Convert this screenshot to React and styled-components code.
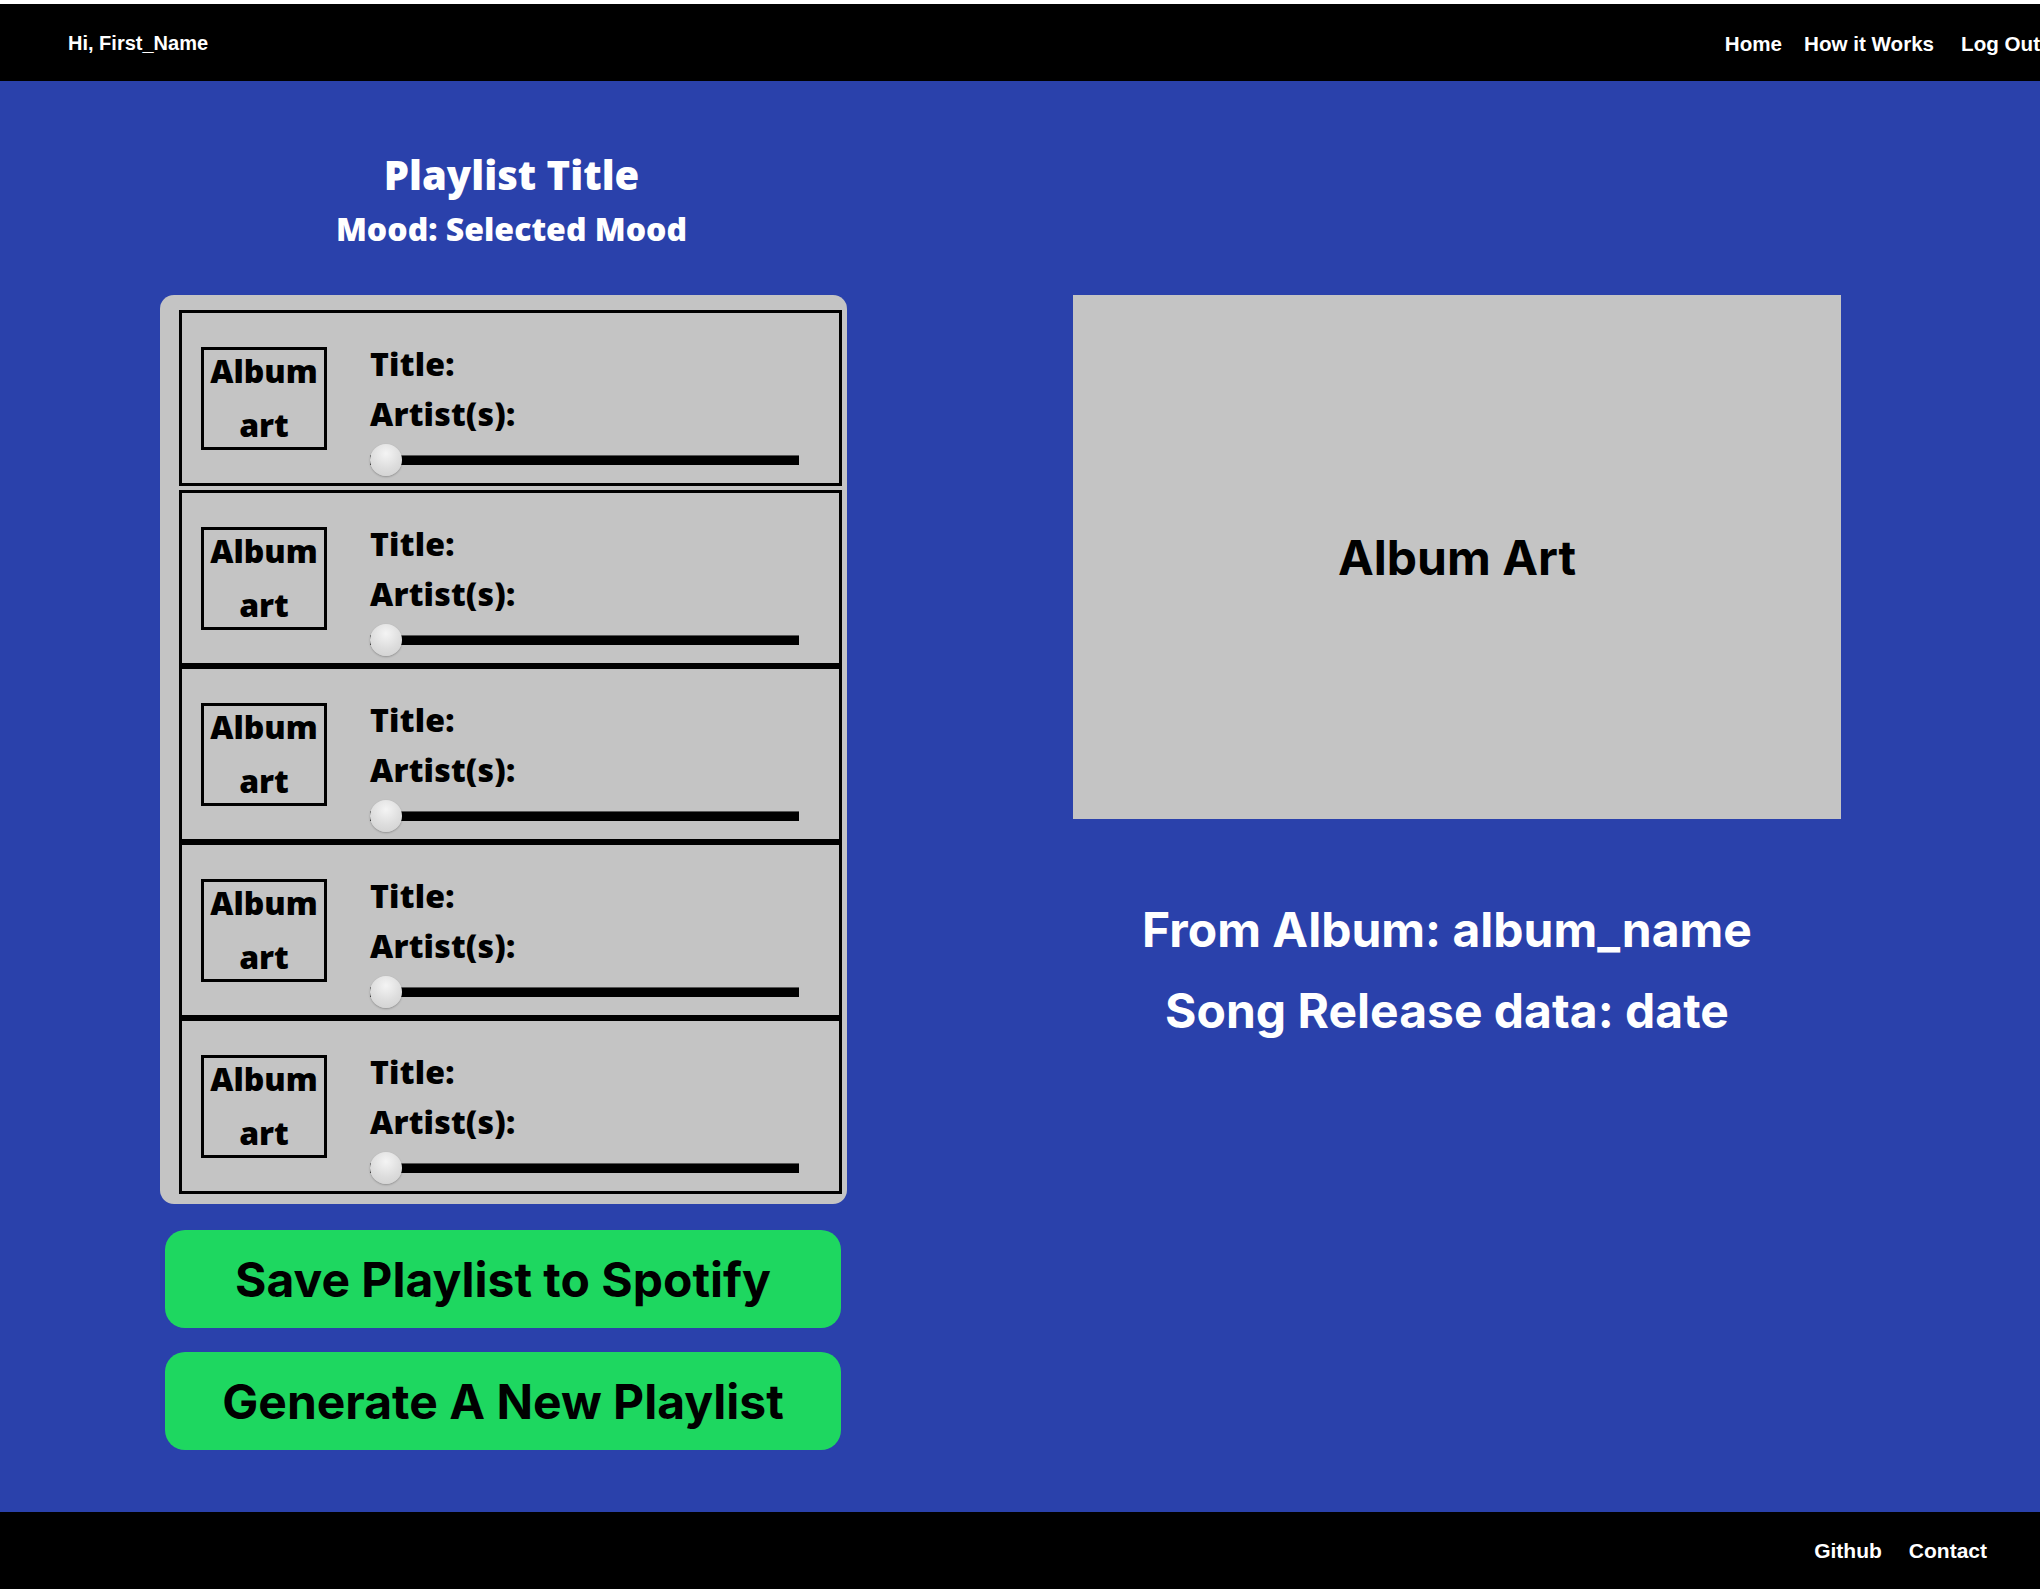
import React, { useState } from "react";
import styled, { createGlobalStyle } from "styled-components";

const GlobalStyle = createGlobalStyle`
  * {
    box-sizing: border-box;
  }
  body {
    margin: 0;
    background: #ffffff;
    overflow-x: hidden;
  }
`;

const Page = styled.div`
  min-height: 100vh;
  display: flex;
  flex-direction: column;
  padding-top: 4px;
`;

const NavBar = styled.header`
  height: 77px;
  background: #000;
  display: flex;
  align-items: center;
  justify-content: space-between;
  padding: 2px 0 0 68px;
  font-family: "Liberation Sans", Arial, sans-serif;
  font-weight: 700;
  color: #fff;
`;

const Greeting = styled.span`
  font-size: 20px;
`;

const NavLinks = styled.nav`
  display: flex;
  align-items: center;
  gap: 22px;
`;

const NavLink = styled.a`
  font-size: 20.6px;
  color: #fff;
  text-decoration: none;
  cursor: pointer;
  margin-left: ${(props) => (props.$extra ? "5px" : "0")};
`;

const Main = styled.main`
  flex: 1;
  background: #2a41ab;
  display: flex;
  align-items: flex-start;
  padding: 70px 0 0 160px;
  gap: 226px;
`;

const LeftColumn = styled.section`
  width: 687px;
  display: flex;
  flex-direction: column;
`;

const Heading = styled.div`
  text-align: center;
  padding-left: 16px;
  color: #fff;
  font-family: "Open Sans", "Noto Sans", sans-serif;
  font-weight: 800;
`;

const PlaylistTitle = styled.h1`
  margin: 0;
  font-size: 40px;
  line-height: 48px;
  font-weight: 800;
`;

const Mood = styled.h2`
  margin: 11px 0 0;
  font-size: 32px;
  line-height: 38px;
  font-weight: 800;
`;

const TrackPanel = styled.div`
  margin-top: 47px;
  background: #c4c4c4;
  border-radius: 14px;
  padding: 15px 5px 10px 19px;
`;

const TrackRow = styled.div`
  height: 176px;
  border: 3px solid #000;
  display: flex;
  align-items: center;

  &:first-child {
    margin-bottom: 4px;
  }
`;

const AlbumThumb = styled.div`
  width: 126px;
  height: 103px;
  margin-left: 19px;
  flex-shrink: 0;
  border: 3px solid #000;
  display: flex;
  align-items: center;
  justify-content: center;
  text-align: center;
  font-family: "Open Sans", "Noto Sans", sans-serif;
  font-weight: 800;
  font-size: 32px;
  line-height: 54px;
  color: #000;
`;

const TrackInfo = styled.div`
  align-self: flex-start;
  margin-left: 43px;
  padding-top: 26px;
  display: flex;
  flex-direction: column;
  font-family: "Open Sans", "Noto Sans", sans-serif;
  font-weight: 800;
  font-size: 32px;
  line-height: 50px;
  letter-spacing: 0.2px;
  color: #000;
`;

const Slider = styled.input.attrs({ type: "range" })`
  -webkit-appearance: none;
  appearance: none;
  width: 429px;
  height: 32px;
  margin: 5px 0 0;
  background: transparent;

  &::-webkit-slider-runnable-track {
    height: 10px;
    background: #000;
    border-top: 1px solid #555;
  }

  &::-webkit-slider-thumb {
    -webkit-appearance: none;
    width: 32px;
    height: 32px;
    margin-top: -12px;
    border-radius: 50%;
    background: radial-gradient(circle at 50% 30%, #f4f4f4 0%, #dddddd 55%, #cfcfcf 100%);
    box-shadow: 0 1px 2px rgba(0, 0, 0, 0.25);
  }
`;

const GreenButton = styled.button`
  width: 676px;
  height: 98px;
  margin: ${(props) => (props.$first ? "26px" : "24px")} 0 0 5px;
  border: none;
  border-radius: 20px;
  background: #1ed760;
  color: #000;
  font-family: Inter, "Liberation Sans", sans-serif;
  font-weight: 700;
  font-size: 48px;
  cursor: pointer;
`;

const RightColumn = styled.section`
  width: 768px;
  margin-top: 144px;
  display: flex;
  flex-direction: column;
`;

const AlbumArt = styled.div`
  height: 524px;
  background: #c4c4c4;
  display: flex;
  align-items: center;
  justify-content: center;
  font-family: Inter, "Liberation Sans", sans-serif;
  font-weight: 700;
  font-size: 48px;
  color: #000;
`;

const SongDetails = styled.div`
  margin-top: 70px;
  padding-right: 20px;
  text-align: center;
  font-family: Inter, "Liberation Sans", sans-serif;
  font-weight: 700;
  font-size: 48px;
  line-height: 81px;
  color: #fff;
`;

const Footer = styled.footer`
  height: 77px;
  background: #000;
  display: flex;
  align-items: center;
  justify-content: flex-end;
  gap: 27px;
  padding-right: 53px;
  font-family: "Liberation Sans", Arial, sans-serif;
  font-weight: 700;
  font-size: 21px;
`;

const FooterLink = styled.a`
  color: #fff;
  text-decoration: none;
  cursor: pointer;
`;

const App = () => {
  const [positions, setPositions] = useState([0, 0, 0, 0, 0]);

  const handleSlide = (index, value) => {
    setPositions((prev) => prev.map((p, i) => (i === index ? value : p)));
  };

  return (
    <Page>
      <GlobalStyle />
      <NavBar>
        <Greeting>Hi, First_Name</Greeting>
        <NavLinks>
          <NavLink>Home</NavLink>
          <NavLink>How it Works</NavLink>
          <NavLink $extra>Log Out</NavLink>
        </NavLinks>
      </NavBar>

      <Main>
        <LeftColumn>
          <Heading>
            <PlaylistTitle>Playlist Title</PlaylistTitle>
            <Mood>Mood: Selected Mood</Mood>
          </Heading>

          <TrackPanel>
            {positions.map((pos, i) => (
              <TrackRow key={i}>
                <AlbumThumb>Album art</AlbumThumb>
                <TrackInfo>
                  <span>Title:</span>
                  <span>Artist(s):</span>
                  <Slider
                    min={0}
                    max={100}
                    value={pos}
                    onChange={(e) => handleSlide(i, Number(e.target.value))}
                  />
                </TrackInfo>
              </TrackRow>
            ))}
          </TrackPanel>

          <GreenButton $first>Save Playlist to Spotify</GreenButton>
          <GreenButton>Generate A New Playlist</GreenButton>
        </LeftColumn>

        <RightColumn>
          <AlbumArt>Album Art</AlbumArt>
          <SongDetails>
            <div>From Album: album_name</div>
            <div>Song Release data: date</div>
          </SongDetails>
        </RightColumn>
      </Main>

      <Footer>
        <FooterLink>Github</FooterLink>
        <FooterLink>Contact</FooterLink>
      </Footer>
    </Page>
  );
};

export default App;
